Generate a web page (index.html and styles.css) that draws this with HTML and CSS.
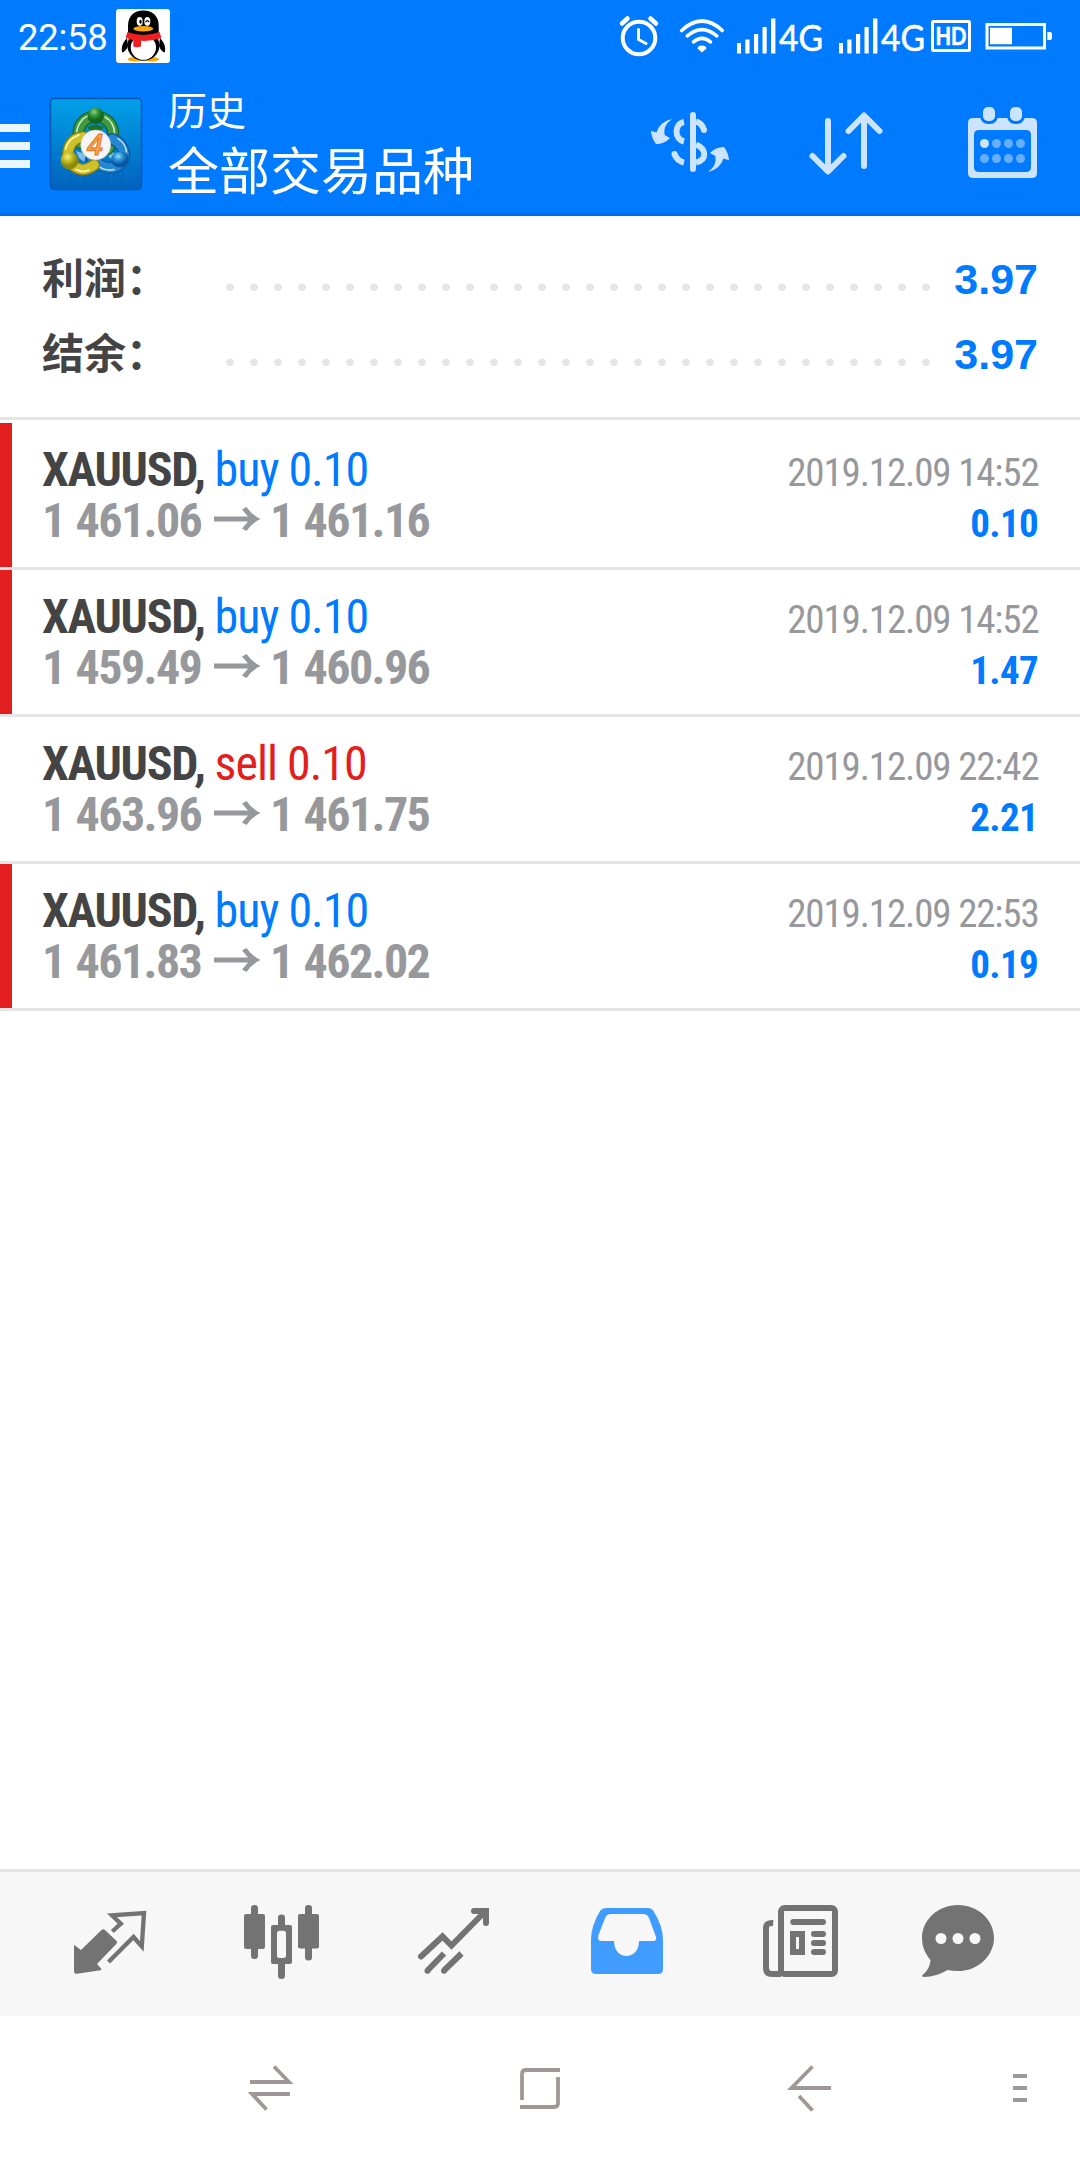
FILE: index.html
```html
<!DOCTYPE html>
<html lang="zh-CN">
<head>
<meta charset="utf-8">
<title>历史</title>
<link rel="stylesheet" href="styles.css">
</head>
<body>
<div class="screen">
  <header class="header">
    <div class="status">
      <span class="clock">22:58</span>
      <svg class="qq" width="54" height="54" viewBox="116 9 54 54">
        <rect x="116" y="9" width="54" height="54" rx="3" fill="#fff"/>
        <ellipse cx="135" cy="59.3" rx="7.5" ry="2.2" fill="#f6a80c"/>
        <ellipse cx="151.500" cy="59.300" rx="7.500" ry="2.200" fill="#f6a80c"/>
        <path d="M127 38C122 43 121 49 122.300 52.500C124.500 52 127 49 128 46ZM160 38C165 43 166 49 164.700 52.500C162.500 52 160 49 159 46Z" fill="#000"/>
        <ellipse cx="143.400" cy="45.500" rx="16" ry="15.300" fill="#000"/>
        <path d="M128 34V26C128 16 134 10.500 143.300 10.500S158.700 16 158.700 26V34Z" fill="#000"/>
        <ellipse cx="143.400" cy="47.500" rx="12.600" ry="12.300" fill="#fff"/>
        <path d="M127.500 32Q143 38 159.500 32L161.500 38Q152 41.500 141 40.800V46.500Q137 48 133.300 46.500V40Q129 39.500 125.500 37.500Z" fill="#ee2024"/>
        <ellipse cx="139.700" cy="21.500" rx="3" ry="4.400" fill="#fff"/>
        <ellipse cx="147.300" cy="21.500" rx="3" ry="4.400" fill="#fff"/>
        <ellipse cx="140.500" cy="21.800" rx="1.200" ry="2" fill="#000"/>
        <path d="M145.500 22.300Q147.300 19 149 22.300" fill="none" stroke="#000" stroke-width="1.200"/>
        <ellipse cx="143.300" cy="28.800" rx="10" ry="2.800" fill="#f6a80c"/>
      </svg>
      <svg class="status-icons" width="440" height="72" viewBox="616 0 440 72" fill="none" stroke="#fff">
        <g stroke-width="4" stroke-linecap="round" stroke-linejoin="round">
          <circle cx="639" cy="38" r="16.300"/>
          <path d="M622 23.500L627.500 18.500M650.500 18.500L656 23.500" stroke-width="4.500"/>
          <path d="M638.500 29.500V39.500L646 43.500" stroke-width="3"/>
          <path d="M681.700 30.500Q702 11.500 722.300 30.500M687.300 35.800Q702 23.500 716.800 35.800M693.500 41.800Q702 35 710.500 41.800" stroke-width="3.600"/>
        </g>
        <path d="M697.500 48.500Q698 45.500 702 45.500T706.500 48.500L702 52.500Z" fill="#fff" stroke="none"/>
        <g id="bars" fill="#fff" stroke="none">
          <path d="M737 43h4v10.500h-4zM745.300 39.500h4.200v14h-4.200zM754 34h4.200v19.500H754zM762.500 27h4.200v26.500h-4.200zM771 18.500h4.400v35H771z"/>
        </g>
        <use href="#bars" x="102"/>
        <g class="net" stroke-width=".6" fill="#fff">
          <text x="779" y="51" textLength="44" lengthAdjust="spacingAndGlyphs">4G</text>
          <text x="881" y="51" textLength="44" lengthAdjust="spacingAndGlyphs">4G</text>
          <text class="hd" x="935.500" y="44.700" textLength="31" lengthAdjust="spacingAndGlyphs">HD</text>
        </g>
        <rect x="932.500" y="21.500" width="37" height="29" rx="1" stroke-width="3"/>
        <rect x="987" y="24.500" width="57.500" height="23.500" stroke-width="3"/>
        <path d="M990 27.700h22V44.300h-22zM1047.300 32h2.700q2 0 2 2v4q0 2-2 2h-2.700z" fill="#fff" stroke="none"/>
      </svg>
    </div>
    <div class="appbar">
      <svg class="menu" width="48" height="141" viewBox="0 72 48 141"><path d="M0 124h30v8H0zM0 142h30v8H0zM0 160h30v8H0z" fill="#ebf5ff"/></svg>
      <svg width="96" height="141" viewBox="48 72 96 141">
        <defs>
          <linearGradient id="tile" x2="0" y2="1"><stop offset="0" stop-color="#02a0e8"/><stop offset="1" stop-color="#0062bd"/></linearGradient>
          <radialGradient id="g" cx=".4" cy=".25"><stop offset="0" stop-color="#8fd08a"/><stop offset=".5" stop-color="#38963c"/><stop offset="1" stop-color="#13681f"/></radialGradient>
          <radialGradient id="y" cx=".4" cy=".3"><stop offset="0" stop-color="#f4ee86"/><stop offset=".5" stop-color="#c9bf25"/><stop offset="1" stop-color="#8b8a0c"/></radialGradient>
          <radialGradient id="b" cx=".4" cy=".3"><stop offset="0" stop-color="#9bdcf8"/><stop offset=".5" stop-color="#2a94d8"/><stop offset="1" stop-color="#0759a5"/></radialGradient>
        </defs>
        <rect x="50.500" y="98.500" width="91" height="91" rx="4" fill="url(#tile)" stroke="#0758b0" stroke-width="1.500"/>
        <path d="M66 99v90M81 99v90M111 99v90M126 99v90M51 113h90M51 128h90M51 158h90M51 174h90" stroke="#2fa8ee" stroke-opacity=".15"/>
        <g fill="none" stroke-linecap="round" stroke-linejoin="round">
          <path d="M80 143C75 127 83 117 95.500 116.500C108 117 116 127 112 140L108 149" stroke="#17621e" stroke-width="12"/>
          <path d="M80 143C75 127 83 117 95.500 116.500C108 117 116 127 112 140L108 149" stroke="#3f9a42" stroke-width="9.500"/>
          <path d="M77 137C75 127 82 118 88 116M105 117Q114 122 114.500 133" stroke="#cdebc8" stroke-width="1.500"/>
          <path d="M112 139C123 143 127 155 122 161C116 171 102 170 92 158" stroke="#0b559e" stroke-width="12"/>
          <path d="M112 139C123 143 127 155 122 161C116 171 102 170 92 158" stroke="#2587d2" stroke-width="9.500"/>
          <path d="M118 138.500Q126 144 126.500 152M95 164Q105 172 114 169.500" stroke="#c3e9fc" stroke-width="1.500"/>
          <path d="M83 137C71 138 66 149 69 159C75 171 85 172 94 165" stroke="#837c0d" stroke-width="12"/>
          <path d="M83 137C71 138 66 149 69 159C75 171 85 172 94 165" stroke="#cdc22b" stroke-width="9.500"/>
          <path d="M79 135Q68 139 65.500 149M76 169.500Q83 173 89 170" stroke="#fff9b4" stroke-width="1.500"/>
        </g>
        <path d="M87 127Q95.700 122 104 127L100 132H91Z" fill="#1c7326"/>
        <path d="M76 151L86 154L84 162L79 158Z" fill="#fff" fill-opacity=".5"/><path d="M108 156L114 152V162Z" fill="#fff" fill-opacity=".5"/>
        <circle cx="95.700" cy="116" r="8.200" fill="url(#g)"/>
        <circle cx="69.500" cy="160.500" r="9" fill="url(#y)"/>
        <ellipse cx="120" cy="159.500" rx="9" ry="8" fill="url(#b)"/>
        <circle cx="95.700" cy="145" r="15" fill="#f6f6f8" stroke="#c8c8c0" stroke-width=".6"/>
        <text class="four" x="95" y="155" text-anchor="middle">4</text>
      </svg>
      <div class="titles"><div class="sub">历史</div><div class="main">全部交易品种</div></div>
      <svg width="156" height="141" viewBox="612 72 156 141">
        <g fill="none" stroke="#cce4ff" stroke-width="6">
          <path d="M693 115V169" stroke-linecap="round"/>
          <path d="M684 122C674 124 674 139 684 141.500M696 121.500Q702 123 704 130M696 144.500C707 149 707 160 696 162.500"/>
          <path d="M674.500 154Q677 161 684 162.500"/>
        </g>
        <circle cx="674.500" cy="154" r="3" fill="#cce4ff"/><circle cx="704" cy="130" r="3" fill="#cce4ff"/>
        <path id="swoop" d="M672 119Q662.500 126 664.700 135L670 138Q664.500 144 656 144Q651.500 138 651 130.700L656.500 132.500Q660 121.500 672 119Z" fill="#cce4ff"/>
        <use href="#swoop" transform="rotate(180 690 145.500)"/>
      </svg>
      <svg width="156" height="141" viewBox="768 72 156 141">
        <path d="M828 121V171M812.500 156L828 171.500L843.500 156M864 166V116M848.500 131L864 115.500L879.500 131" fill="none" stroke="#cce4ff" stroke-width="6" stroke-linecap="round" stroke-linejoin="round"/>
      </svg>
      <svg width="156" height="141" viewBox="924 72 156 141">
        <path fill-rule="evenodd" d="M973 118h59q5 0 5 5v50q0 5-5 5h-59q-5 0-5-5v-50q0-5 5-5zM979 130q-5 0-5 5v32q0 5 5 5h47q5 0 5-5v-32q0-5-5-5z" fill="#cce4ff"/>
        <g fill="#cce4ff" stroke="#007aff" stroke-width="6" paint-order="stroke"><rect x="983" y="107" width="12" height="14" rx="5"/><rect x="1010" y="107" width="12" height="14" rx="5"/></g>
        <g fill="#66afff"><circle cx="984.500" cy="143.500" r="4.500" fill="#cce4ff"/><circle cx="996.500" cy="143.500" r="4.500"/><circle cx="1008.500" cy="143.500" r="4.500"/><circle cx="1020.500" cy="143.500" r="4.500"/><circle cx="984.500" cy="158.500" r="4.500"/><circle cx="996.500" cy="158.500" r="4.500"/><circle cx="1008.500" cy="158.500" r="4.500"/><circle cx="1020.500" cy="158.500" r="4.500"/></g>
      </svg>
    </div>
  </header>

  <section class="summary">
    <div class="sum-row"><span class="label">利润：</span><span class="dots"></span><span class="value">3.97</span></div>
    <div class="sum-row"><span class="label">结余：</span><span class="dots"></span><span class="value">3.97</span></div>
  </section>

  <svg class="defs" width="0" height="0"><defs><path id="arrow" d="M0 9.500H34L28 2.500L32.500 0Q38 8 46.500 12Q38 16 32.500 24L28 21.500L34 14.500H0Z"/></defs></svg>
  <main class="deals">
    <article class="deal marked">
      <div class="left"><div class="line"><b class="sym">XAUUSD,</b><span class="side buy">buy 0.10</span></div>
      <div class="line prices"><span>1 461.06</span><svg class="to" width="47" height="24"><use href="#arrow"/></svg><span>1 461.16</span></div></div>
      <div class="right"><div class="date">2019.12.09 14:52</div><div class="profit">0.10</div></div>
    </article>
    <article class="deal marked">
      <div class="left"><div class="line"><b class="sym">XAUUSD,</b><span class="side buy">buy 0.10</span></div>
      <div class="line prices"><span>1 459.49</span><svg class="to" width="47" height="24"><use href="#arrow"/></svg><span>1 460.96</span></div></div>
      <div class="right"><div class="date">2019.12.09 14:52</div><div class="profit">1.47</div></div>
    </article>
    <article class="deal">
      <div class="left"><div class="line"><b class="sym">XAUUSD,</b><span class="side sell">sell 0.10</span></div>
      <div class="line prices"><span>1 463.96</span><svg class="to" width="47" height="24"><use href="#arrow"/></svg><span>1 461.75</span></div></div>
      <div class="right"><div class="date">2019.12.09 22:42</div><div class="profit">2.21</div></div>
    </article>
    <article class="deal marked">
      <div class="left"><div class="line"><b class="sym">XAUUSD,</b><span class="side buy">buy 0.10</span></div>
      <div class="line prices"><span>1 461.83</span><svg class="to" width="47" height="24"><use href="#arrow"/></svg><span>1 462.02</span></div></div>
      <div class="right"><div class="date">2019.12.09 22:53</div><div class="profit">0.19</div></div>
    </article>
  </main>

  <nav class="tabs">
    <svg width="172" height="144" viewBox="24 1872 172 144">
      <path d="M75 1945.500L81 1950L101.500 1930Q103.300 1928.300 105 1930L116.500 1941Q117.700 1942.300 116.500 1943.700L97 1964L101.500 1969Q101.500 1970 100.500 1970.300L77 1973.800Q74 1974 74 1971V1946Q74 1944.500 75 1945.500Z" fill="#737373"/>
      <path d="M112.300 1931.500L120.800 1923.700L112 1915.300L144 1913L141.800 1946.500L133.500 1937L108.500 1962" fill="none" stroke="#737373" stroke-width="4.300" stroke-linejoin="miter"/>
    </svg>
    <svg width="172" height="144" viewBox="196 1872 172 144" fill="#737373">
      <rect x="251" y="1905" width="7" height="54" rx="3.300"/><rect x="244" y="1914" width="21" height="35" rx="2"/>
      <rect x="278" y="1914.500" width="7" height="64.500" rx="3.300"/><rect x="271" y="1925" width="21" height="39" rx="2"/><rect x="277" y="1930.700" width="9" height="27.300" rx="2.500" fill="#f7f7f7"/>
      <rect x="305" y="1905" width="7" height="55.500" rx="3.300"/><rect x="298" y="1914" width="21" height="34.500" rx="2"/>
    </svg>
    <svg width="172" height="144" viewBox="368 1872 172 144" fill="none" stroke="#737373" stroke-width="6">
      <path d="M421 1956.500L442.500 1936.500L451.500 1945.500L485.500 1911M474 1911H486V1923" stroke-linecap="round"/>
      <path d="M428 1970L444 1953.500M444.500 1970L461.500 1953.500"/><circle cx="427.500" cy="1970.800" r="3" stroke="none" fill="#737373"/><circle cx="444" cy="1970.800" r="3" stroke="none" fill="#737373"/>
    </svg>
    <svg width="172" height="144" viewBox="540 1872 172 144">
      <path fill-rule="evenodd" d="M607 1908H648Q651.500 1908 653.500 1911Q663 1926 663 1940V1969Q663 1974 658 1974H596Q591 1974 591 1969V1940Q591 1926 600 1911Q602 1908 607 1908ZM611 1914Q607 1914 605.500 1917L598.500 1935Q597 1941 601.500 1941H614C614 1961 639 1961 639 1941H653Q657 1941 656 1937L649 1918Q647.500 1914 643 1914Z" fill="#409cff"/>
    </svg>
    <svg width="172" height="144" viewBox="712 1872 172 144" fill="none" stroke="#737373" stroke-width="6">
      <rect x="781" y="1908" width="54" height="66" rx="3.500"/><path d="M773.200 1923Q766 1922.500 766 1928V1968Q766 1974 772 1974H781"/>
      <path d="M793.300 1922H823M814 1934H823M814 1943H823M814 1952H823" stroke-linecap="round"/><rect x="793" y="1934" width="9" height="18"/>
    </svg>
    <svg width="148" height="144" viewBox="884 1872 148 144">
      <path d="M958 1905C978 1905 994 1920 994 1938S976 1976 947.500 1970Q936 1977 924 1977Q921 1976.500 923 1974.500Q930 1969 930.500 1960C925.500 1954 922 1947 922 1938C922 1920 938 1905 958 1905Z" fill="#737373"/>
      <g fill="#f7f7f7"><circle cx="941" cy="1938.500" r="5.500"/><circle cx="958" cy="1938.500" r="5.500"/><circle cx="975" cy="1938.500" r="5.500"/></g>
    </svg>
  </nav>
  <footer class="sysnav">
    <svg width="1080" height="144" viewBox="0 2016 1080 144" fill="none" stroke="#a09896" stroke-width="3.800">
      <path d="M250 2082H289L274 2066.500M290 2094H252L266.500 2109.500"/>
      <path d="M522 2100V2074Q522 2070 526 2070H560M558 2077V2103Q558 2107 554 2107H520"/>
      <path d="M831 2088H791.500L812.500 2066.500M799 2096L812.500 2110.500"/>
      <path d="M1013 2076H1027M1013 2088H1027M1013 2100H1027" stroke="#999"/>
    </svg>
  </footer>
</div>
</body>
</html>
```
FILE: styles.css
```css
* { box-sizing: border-box; }
body { margin: 0; background: #fff; }
svg { display: block; flex: none; }
.screen { width: 1080px; height: 2160px; display: flex; flex-direction: column; background: #fff; font-family: Roboto, "Noto Sans CJK SC", sans-serif; }

.header { height: 216px; background: #007aff; border-bottom: 3px solid #006de5; color: #fff; flex: none; }
.status { height: 72px; display: flex; align-items: center; padding: 0 24px 0 18px; }
.clock { width: 98px; font-size: 36.5px; line-height: 72px; padding-top: 3px; letter-spacing: -0.3px; }
.status-icons { margin-left: auto; }
.net { font: 36.5px Lato, sans-serif; }
.net .hd { font-size: 24px; font-weight: 700; }
.appbar { height: 141px; display: flex; }
.four { font: italic 600 29px "Open Sans", sans-serif; fill: #f7a445; stroke: #d9701c; stroke-width: 0.8px; }
.titles { margin-left: 24px; flex: 1; font-family: "Noto Sans CJK SC", sans-serif; white-space: nowrap; padding-top: 8px; }
.sub { font-size: 39px; line-height: 56px; }
.main { font-size: 51px; line-height: 64px; }

.summary { height: 204px; padding: 26px 42px 0; border-bottom: 3px solid #e5e5e5; flex: none; }
.sum-row { display: flex; height: 75px; line-height: 75px; }
.label { width: 176px; font: 700 42px/67px "Noto Sans CJK SC", sans-serif; color: #444; white-space: nowrap; }
.dots { width: 720px; height: 75px; background: radial-gradient(circle at 12px 45.3px, #e5e5e5 3.4px, transparent 4.2px) 0 0 / 24px 75px; }
.value { margin-left: auto; font: 700 43px/75px "Liberation Sans", sans-serif; color: #007aff; }

.defs { position: absolute; }
.deals { flex: 1; padding-top: 3px; }
.deal { height: 147px; border-bottom: 3px solid #e5e5e5; display: flex; justify-content: space-between; padding: 21px 42px 0; font-family: "Roboto Condensed", Roboto, sans-serif; white-space: nowrap; }
.marked { background: linear-gradient(#e31e1e, #e31e1e) 0 0 / 12px 144px no-repeat; }
.line { display: flex; align-items: center; height: 51px; line-height: 51px; font-size: 48px; }
.sym { width: 172.5px; color: #444; letter-spacing: -1.3px; }
.side { letter-spacing: -1px; }
.buy { color: #007aff; }
.sell { color: #e31e1e; }
.prices { color: #97989c; font-weight: 700; letter-spacing: -1.6px; word-spacing: 1.5px; }
.to { margin: -3px 9px 0 13px; fill: #97989c; }
.prices span:first-child { width: 159px; }
.right { text-align: right; font-size: 39px; }
.date { height: 51px; line-height: 59px; color: #97989c; letter-spacing: -1.15px; margin-right: -0.5px; }
.profit { height: 51px; line-height: 59px; color: #007aff; font-weight: 700; letter-spacing: -0.7px; }

.tabs { height: 147px; border-top: 3px solid #e5e5e5; background: #f7f7f7; display: flex; padding-left: 24px; flex: none; }
.sysnav { height: 144px; background: #fff; flex: none; }
```
